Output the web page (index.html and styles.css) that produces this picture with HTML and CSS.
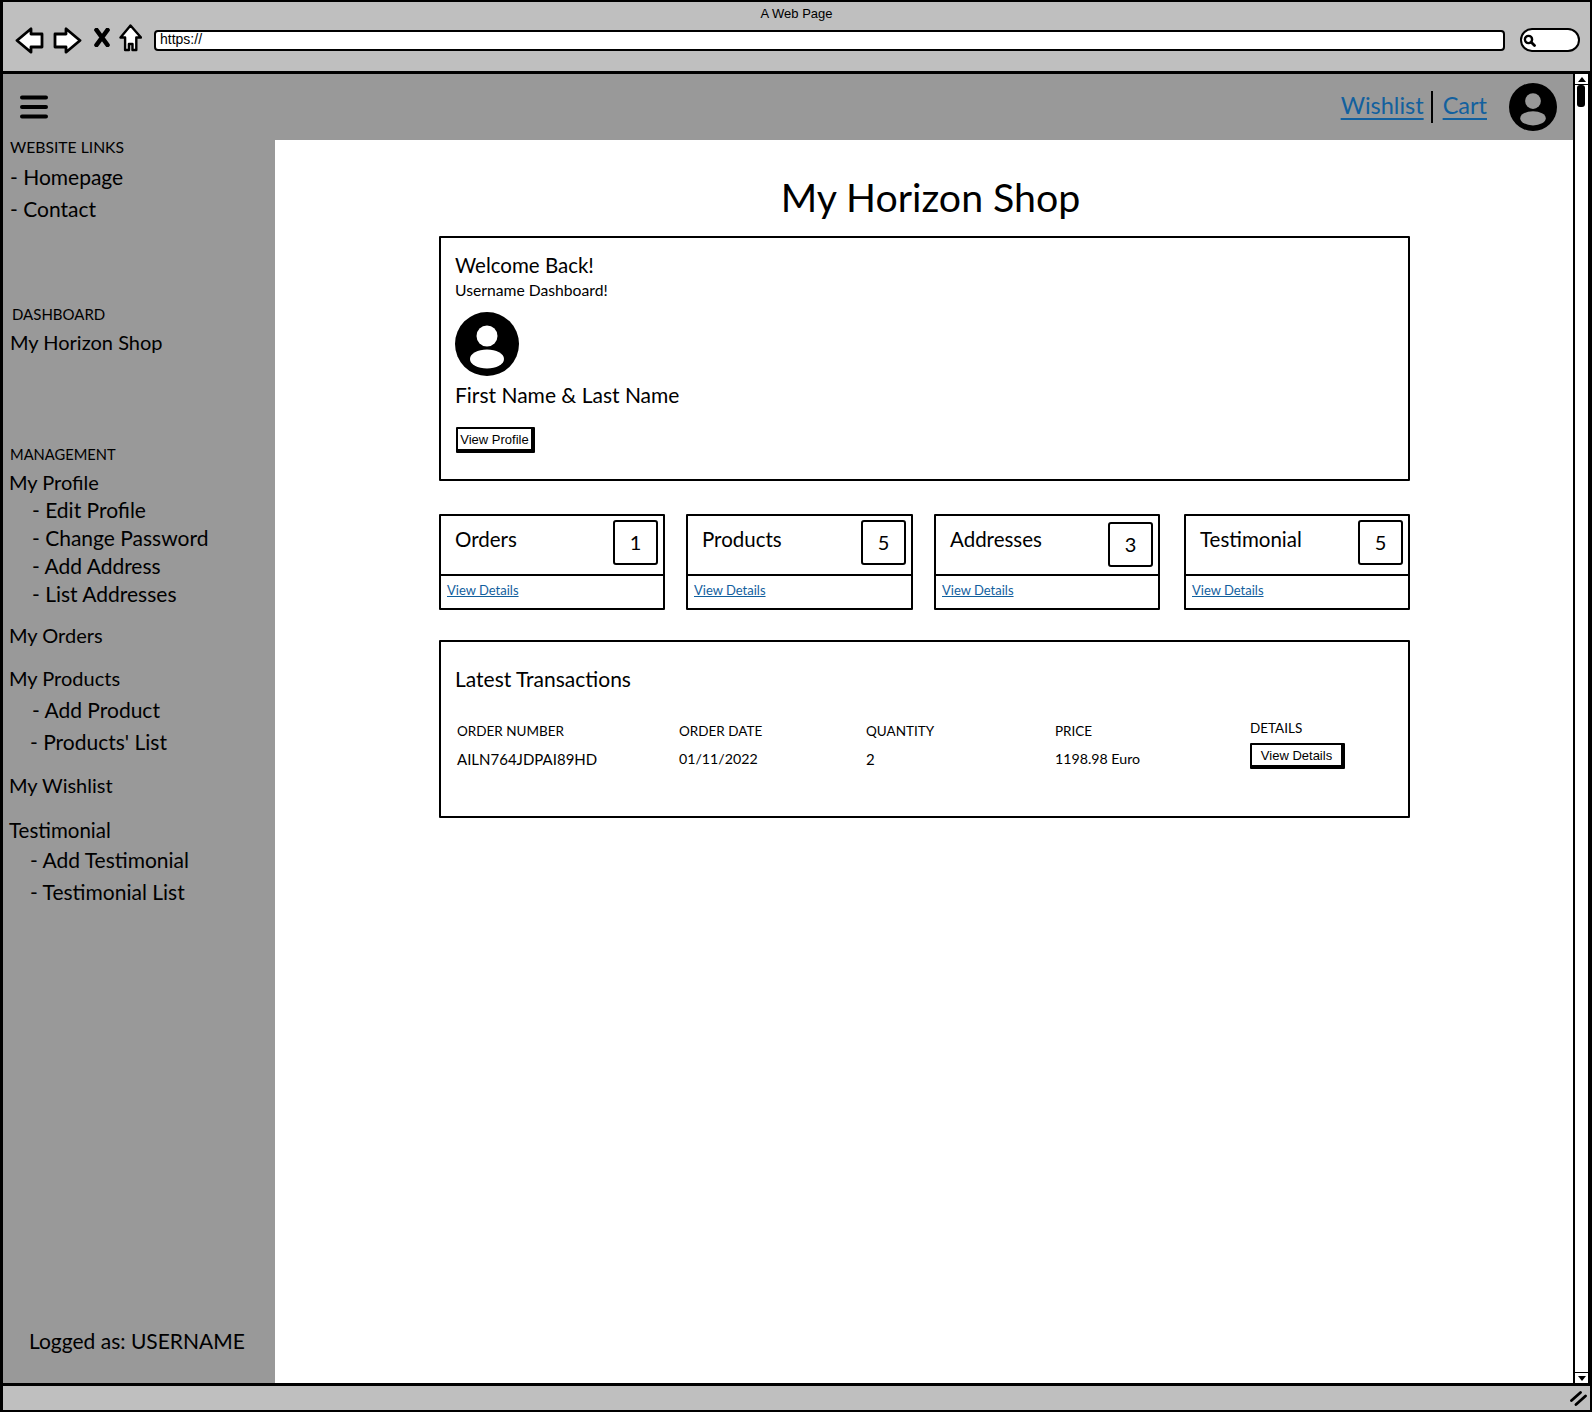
FILE: index.html
```html
<!DOCTYPE html>
<html>
<head>
  <title>My Horizon Shop</title>
  <link rel="stylesheet" href="styles.css">
</head>
<body>
  <div class="window">
    <div class="toolbar">
      <div class="window-title">A Web Page</div>
      <div class="controls">
        <svg class="icon-back" width="29" height="27" viewBox="0 0 29 27"><path d="M2 13.5 16 1.800v5.200h11v13H16v5.200z" fill="#fff" stroke="#000" stroke-width="2.8" stroke-linejoin="round"/></svg>
        <svg class="icon-forward" width="29" height="27" viewBox="0 0 29 27"><path d="M27 13.5 13 1.800v5.200H2v13h11v5.200z" fill="#fff" stroke="#000" stroke-width="2.8" stroke-linejoin="round"/></svg>
        <svg class="icon-stop" width="16" height="19" viewBox="0 0 16 19"><path d="M2.500 2 13.500 17M13.500 2 2.500 17" stroke="#000" stroke-width="4.600" stroke-linecap="round"/></svg>
        <svg class="icon-home" width="23" height="28" viewBox="0 0 23 28"><path d="M11.500 1.500 1.500 13.500h4.600V26h3.800v-6h3.600v6h3.800V13.500h4.700z" fill="#fff" stroke="#000" stroke-width="2.400" stroke-linejoin="round"/></svg>
        <div class="url-bar">https://</div>
        <div class="search-pill">
          <svg width="13" height="13" viewBox="0 0 13 13"><circle cx="5.500" cy="5.500" r="3.600" fill="none" stroke="#000" stroke-width="2.400"/><path d="m8.500 8.500 3 3" stroke="#000" stroke-width="2.800" stroke-linecap="round"/></svg>
        </div>
      </div>
    </div>

    <div class="page">
      <div class="page-body">
        <div class="header">
          <svg class="hamburger" width="28" height="24" viewBox="0 0 28 24"><path d="M2 2.500h24M2 12h24M2 21.500h24" stroke="#000" stroke-width="4" stroke-linecap="round"/></svg>
          <div class="header-links">
            <a class="header-link" href="#">Wishlist</a>
            <span class="header-sep"></span>
            <a class="header-link" href="#">Cart</a>
          </div>
          <svg class="avatar-small" width="48" height="48" viewBox="0 0 64 64"><circle cx="32" cy="32" r="32"/><circle cx="32" cy="24" r="10.500" fill="#999"/><ellipse cx="32" cy="47" rx="17" ry="9.500" fill="#999"/></svg>
        </div>

        <div class="columns">
          <div class="sidebar">
            <div class="nav-label nav-label-wide">WEBSITE LINKS</div>
            <div class="nav-link nav-first">- Homepage</div>
            <div class="nav-link nav-tight">- Contact</div>

            <div class="nav-label nav-dashboard">DASHBOARD</div>
            <div class="nav-link nav-top nav-shop">My Horizon Shop</div>

            <div class="nav-label nav-management">MANAGEMENT</div>
            <div class="nav-link nav-top nav-profile">My Profile</div>
            <div class="nav-link nav-sub">- Edit Profile</div>
            <div class="nav-link nav-sub">- Change Password</div>
            <div class="nav-link nav-sub">- Add Address</div>
            <div class="nav-link nav-sub">- List Addresses</div>

            <div class="nav-link nav-top nav-orders">My Orders</div>
            <div class="nav-link nav-top nav-group">My Products</div>
            <div class="nav-link nav-sub nav-tight">- Add Product</div>
            <div class="nav-link nav-sub nav-tight nav-shift">- Products' List</div>
            <div class="nav-link nav-top nav-group">My Wishlist</div>
            <div class="nav-link nav-testimonial">Testimonial</div>
            <div class="nav-link nav-sub nav-shift nav-close">- Add Testimonial</div>
            <div class="nav-link nav-sub nav-tight nav-shift">- Testimonial List</div>

            <div class="logged-as">Logged as: USERNAME</div>
          </div>

          <div class="main">
            <h1 class="page-title">My Horizon Shop</h1>

            <div class="card welcome-card">
              <div class="welcome-title">Welcome Back!</div>
              <div class="welcome-sub">Username Dashboard!</div>
              <svg class="avatar-large" width="64" height="64" viewBox="0 0 64 64"><circle cx="32" cy="32" r="32"/><circle cx="32" cy="24" r="10.500" fill="#fff"/><ellipse cx="32" cy="47" rx="17" ry="9.500" fill="#fff"/></svg>
              <div class="welcome-name">First Name &amp; Last Name</div>
              <button class="sketch-btn profile-btn">View Profile</button>
            </div>

            <div class="stats">
              <div class="card stat-card">
                <div class="stat-head"><span class="stat-name">Orders</span><span class="stat-count">1</span></div>
                <div class="stat-foot"><a href="#">View Details</a></div>
              </div>
              <div class="card stat-card">
                <div class="stat-head"><span class="stat-name">Products</span><span class="stat-count">5</span></div>
                <div class="stat-foot"><a href="#">View Details</a></div>
              </div>
              <div class="card stat-card">
                <div class="stat-head"><span class="stat-name">Addresses</span><span class="stat-count stat-count-low">3</span></div>
                <div class="stat-foot"><a href="#">View Details</a></div>
              </div>
              <div class="card stat-card stat-card-last">
                <div class="stat-head"><span class="stat-name">Testimonial</span><span class="stat-count">5</span></div>
                <div class="stat-foot"><a href="#">View Details</a></div>
              </div>
            </div>

            <div class="card transactions">
              <div class="transactions-title">Latest Transactions</div>
              <div class="tx-grid">
                <div class="tx-col">
                  <div class="tx-head">ORDER NUMBER</div>
                  <div class="tx-value">AILN764JDPAI89HD</div>
                </div>
                <div class="tx-col">
                  <div class="tx-head">ORDER DATE</div>
                  <div class="tx-value tx-number">01/11/2022</div>
                </div>
                <div class="tx-col">
                  <div class="tx-head">QUANTITY</div>
                  <div class="tx-value">2</div>
                </div>
                <div class="tx-col">
                  <div class="tx-head">PRICE</div>
                  <div class="tx-value tx-number">1198.98 Euro</div>
                </div>
                <div class="tx-col tx-details">
                  <div class="tx-head">DETAILS</div>
                  <button class="sketch-btn details-btn">View Details</button>
                </div>
              </div>
            </div>
          </div>
        </div>
      </div>

      <div class="scrollbar">
        <div class="scroll-btn"><span class="arrow-up"></span></div>
        <div class="scroll-thumb"></div>
        <div class="scroll-track"></div>
        <div class="scroll-btn scroll-btn-down"><span class="arrow-down"></span></div>
      </div>
    </div>

    <div class="statusbar">
      <svg width="17" height="15" viewBox="0 0 17 15"><path d="M1.500 9.500 10.500 1.500M6 13.500 15.500 5" stroke="#000" stroke-width="2.800" stroke-linecap="round"/></svg>
    </div>
  </div>
</body>
</html>
```

FILE: styles.css
```css
* {
  box-sizing: border-box;
}

body {
  margin: 0;
  background-color: #fff;
  color: #000;
  font-family: "Lato", "Liberation Sans", sans-serif;
}

.window {
  display: flex;
  flex-direction: column;
  width: 1592px;
  height: 1412px;
  border: 2px solid #000;
  border-left-width: 3px;
  overflow: hidden;
}

/* browser chrome */
.toolbar {
  height: 72px;
  padding-top: 4px;
  background-color: #bfbfbf;
  border-bottom: 3px solid #000;
}

.window-title {
  height: 16px;
  font-family: "Liberation Sans", sans-serif;
  font-size: 13px;
  line-height: 16px;
  text-align: center;
}

.controls {
  display: flex;
  align-items: center;
  height: 30px;
  margin-top: 3px;
  padding-left: 12px;
}

.icon-forward {
  margin-left: 9px;
}

.icon-stop {
  margin-left: 12px;
  margin-top: -6px;
}

.icon-home {
  margin-left: 9px;
  margin-top: -4px;
}

.url-bar {
  flex: 1;
  height: 21px;
  margin-left: 12px;
  padding-left: 4px;
  background-color: #fff;
  border: 2.500px solid #000;
  border-radius: 4px;
  font-family: "Liberation Sans", sans-serif;
  font-size: 14px;
  line-height: 15px;
}

.search-pill {
  display: flex;
  align-items: center;
  width: 60px;
  height: 24px;
  margin-left: 15px;
  margin-right: 10px;
  padding-left: 1px;
  background-color: #fff;
  border: 2.500px solid #000;
  border-radius: 12px;
}

/* page */
.page {
  display: flex;
  flex: 1;
  min-height: 0;
}

.page-body {
  display: flex;
  flex-direction: column;
  flex: 1;
  background-color: #999;
}

.header {
  display: flex;
  align-items: center;
  height: 66px;
  padding-right: 16px;
  padding-left: 17px;
}

.hamburger {
  margin-right: auto;
}

.header-links {
  display: flex;
  align-items: center;
  margin-right: 22px;
}

.header-link {
  margin-bottom: 4px;
  color: #12609e;
  font-size: 23.500px;
  text-decoration: underline;
  text-underline-offset: 4px;
}

.header-sep {
  width: 2px;
  height: 32px;
  margin: 0 10px 0 7px;
  background-color: #000;
}

.columns {
  display: flex;
  flex: 1;
  min-height: 0;
}

/* sidebar */
.sidebar {
  display: flex;
  flex-direction: column;
  flex-shrink: 0;
  width: 272px;
  padding-bottom: 28px;
  padding-left: 7px;
}

.nav-label {
  font-size: 15px;
  line-height: 14px;
}

.nav-label-wide {
  font-size: 15.700px;
}

.nav-link {
  font-size: 21px;
  line-height: 28px;
}

.nav-top {
  margin-left: -1px;
  font-size: 20px;
}

.nav-first {
  margin-top: 9px;
}

.nav-tight {
  margin-top: 4px;
}

.nav-close {
  margin-top: 2px;
}

.nav-dashboard {
  margin-top: 84px;
  margin-left: 2px;
}

.nav-shop {
  margin-top: 7px;
  margin-left: 0;
}

.nav-management {
  margin-top: 91px;
  font-size: 14.700px;
}

.nav-profile {
  margin-top: 7px;
}

.nav-sub {
  padding-left: 22px;
}

.nav-shift {
  padding-left: 20px;
}

.nav-orders {
  margin-top: 13px;
}

.nav-group {
  margin-top: 15px;
}

.nav-testimonial {
  margin-top: 17px;
  margin-left: -1px;
  font-size: 20.500px;
}

.logged-as {
  margin-top: auto;
  margin-left: 19px;
  font-size: 21px;
  line-height: 28px;
}

/* main panel */
.main {
  flex: 1;
  padding: 34px 163px 0 164px;
  background-color: #fff;
}

.page-title {
  margin: 0 0 16px;
  padding-left: 12px;
  font-size: 39.300px;
  font-weight: 400;
  line-height: 46px;
  text-align: center;
}

.card {
  background-color: #fff;
  border: 2.500px solid #000;
  border-radius: 1px;
}

.welcome-card {
  height: 245px;
  padding: 14px 14px 0;
}

.welcome-title {
  font-size: 20.500px;
  line-height: 26px;
}

.welcome-sub {
  margin-top: 2px;
  font-size: 15.700px;
  line-height: 20px;
}

.avatar-large {
  display: block;
  margin-top: 12px;
}

.welcome-name {
  margin-top: 5px;
  font-size: 21px;
  line-height: 28px;
}

.sketch-btn {
  display: block;
  padding: 0;
  background-color: #fff;
  border: 2px solid #000;
  border-right-width: 4px;
  border-bottom-width: 4px;
  border-radius: 1px;
  color: #000;
  font-family: "Liberation Sans", sans-serif;
  font-size: 13px;
}

.profile-btn {
  width: 79px;
  height: 26px;
  margin-top: 18px;
  margin-left: 1px;
}

.stats {
  display: grid;
  grid-template-columns: 226px 227px 226px 1fr;
  gap: 21px;
  margin-top: 33px;
}

.stat-card {
  height: 96px;
}

.stat-card-last {
  margin-left: 3px;
}

.stat-head {
  display: flex;
  align-items: flex-start;
  justify-content: space-between;
  height: 60px;
  padding-top: 4px;
  padding-right: 5px;
  padding-left: 14px;
  border-bottom: 2px solid #000;
}

.stat-name {
  margin-top: 5px;
  font-size: 20.500px;
  line-height: 28px;
}

.stat-count {
  width: 45px;
  height: 45px;
  background-color: #fff;
  border: 2px solid #000;
  border-radius: 3px;
  font-size: 20px;
  line-height: 41px;
  text-align: center;
}

.stat-count-low {
  margin-top: 2px;
}

.stat-foot {
  padding-left: 6px;
  font-size: 13px;
  line-height: 29px;
}

.stat-foot a {
  color: #12609e;
}

.transactions {
  height: 178px;
  margin-top: 30px;
  padding: 23px 14px 0;
}

.transactions-title {
  font-size: 21px;
  line-height: 28px;
}

.tx-grid {
  display: grid;
  grid-template-columns: 222px 187px 189px 195px 1fr;
  margin-top: 29px;
  padding-left: 2px;
}

.tx-head {
  font-size: 13.500px;
  line-height: 18px;
}

.tx-value {
  margin-top: 9px;
  font-size: 15px;
  line-height: 20px;
}

.tx-number {
  font-size: 14.200px;
}

.tx-details {
  margin-top: -3px;
}

.details-btn {
  width: 95px;
  height: 26px;
  margin-top: 6px;
}

/* scrollbar and status */
.scrollbar {
  display: flex;
  flex-direction: column;
  flex-shrink: 0;
  width: 17px;
  background-color: #fff;
  border-right: 2px solid #000;
  border-left: 2px solid #000;
}

.scroll-btn {
  display: flex;
  align-items: center;
  justify-content: center;
  height: 11px;
  border-bottom: 1.500px solid #000;
}

.scroll-btn-down {
  border-top: 1.500px solid #000;
  border-bottom: 0;
}

.arrow-up {
  border-right: 4px solid transparent;
  border-bottom: 5px solid #000;
  border-left: 4px solid transparent;
}

.arrow-down {
  border-top: 5px solid #000;
  border-right: 4px solid transparent;
  border-left: 4px solid transparent;
}

.scroll-thumb {
  width: 8px;
  height: 22px;
  margin-left: 2px;
  background-color: #000;
  border-radius: 3px;
}

.scroll-track {
  flex: 1;
}

.statusbar {
  display: flex;
  align-items: center;
  justify-content: flex-end;
  height: 27px;
  padding-right: 3px;
  background-color: #bfbfbf;
  border-top: 3px solid #000;
}
```
